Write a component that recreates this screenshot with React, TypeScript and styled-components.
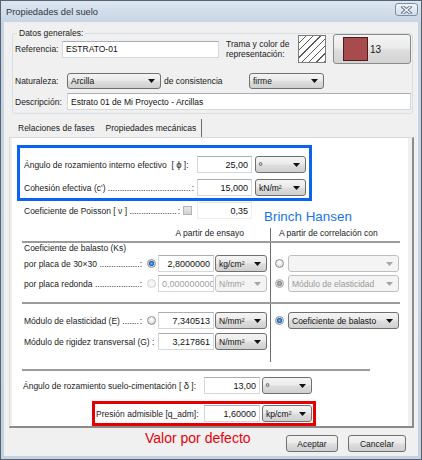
import React from "react";
import styled, { createGlobalStyle } from "styled-components";

const GlobalStyle = createGlobalStyle`
  html, body {
    margin: 0;
    padding: 0;
    background: #ffffff;
  }
`;

type RadioState = "on" | "off" | "dim" | "dimOn";

const radioBg: Record<RadioState, string> = {
    on: "radial-gradient(circle, #6bbcf7 0, #1a64c0 2.2px, #cdd2d8 2.9px, #f5f5f5 4.5px)",
    off: "radial-gradient(circle at 50% 35%, #ffffff 0, #e9e9e9 3px, #d2d2d2 4.5px)",
    dim: "radial-gradient(circle, #f8f8f8 0, #ededed 4.5px)",
    dimOn: "radial-gradient(circle, #b8b8b8 0, #8e8e8e 2.2px, #dadada 2.9px, #f1f1f1 4.5px)"
};

const Window = styled.div`
    width: 422px;
    height: 460px;
    box-sizing: border-box;
    border: 1px solid #56626f;
    background: linear-gradient(#dce6f1, #c6d4e4 22px, #c3d1e1);
    display: flex;
    flex-direction: column;
    font-family: "Liberation Sans", Arial, sans-serif;
    font-size: 8.5px;
    color: #1a1a1a;
`;

const TitleBar = styled.div`
    height: 21px;
    flex: none;
    display: flex;
    justify-content: space-between;
    align-items: center;
    padding: 0 3px 0 5px;
`;

const Title = styled.span`
    font-size: 9.3px;
    color: #2e3640;
`;

const CloseButton = styled.div`
    align-self: flex-start;
    margin-top: 2px;
    width: 23px;
    height: 13px;
    box-sizing: border-box;
    border: 1px solid #7f8ea2;
    border-radius: 3px;
    background: linear-gradient(#f1f5fa, #d2dde9);
    display: flex;
    align-items: center;
    justify-content: center;
`;

const Body = styled.div`
    flex: 1;
    margin: 0 3px 3px;
    background: #f0f0f0;
    padding: 0 4px 0 5px;
    display: flex;
    flex-direction: column;
`;

const GroupBox = styled.div`
    position: relative;
    margin: 11px 1px 0 3px;
    border: 1px solid #d5dfe5;
    border-radius: 3px;
    padding: 0 1px 3px 2px;
`;

const Legend = styled.span`
    position: absolute;
    top: -6px;
    left: 4px;
    padding: 0 2px;
    line-height: 11px;
    background: #f0f0f0;
`;

const GroupRow = styled.div<{ $h: number; $mt?: number }>`
    display: flex;
    align-items: center;
    height: ${(p) => p.$h}px;
    margin-top: ${(p) => p.$mt ?? 0}px;
`;

const FieldLabel = styled.span<{ $w: number }>`
    width: ${(p) => p.$w}px;
    flex: none;
    white-space: nowrap;
`;

const Caption = styled.span<{ $w: number; $ml?: number }>`
    width: ${(p) => p.$w}px;
    margin-left: ${(p) => p.$ml ?? 0}px;
    flex: none;
    line-height: 10.5px;
    white-space: nowrap;
`;

const Field = styled.div<{ $w?: number; $left?: boolean; $muted?: boolean; $flat?: boolean; $small?: boolean }>`
    box-sizing: border-box;
    ${(p) => (p.$w ? `width: ${p.$w}px; flex: none;` : "flex: 1;")}
    height: 17px;
    background: #ffffff;
    border: 1px solid ${(p) => (p.$flat ? "#ededed" : "#d4d7dc")};
    border-top-color: ${(p) => (p.$flat ? "#e3e3e3" : "#abadb3")};
    padding: 0 3px;
    display: flex;
    align-items: center;
    justify-content: ${(p) => (p.$left ? "flex-start" : "flex-end")};
    overflow: hidden;
    white-space: nowrap;
    font-size: ${(p) => (p.$small ? "8.5px" : "9px")};
    color: ${(p) => (p.$muted ? "#a0a0a0" : "#111111")};
`;

const Combo = styled.div<{ $w: number; $h?: number; $off?: boolean; $ml?: number }>`
    box-sizing: border-box;
    width: ${(p) => p.$w}px;
    height: ${(p) => p.$h ?? 17}px;
    margin-left: ${(p) => p.$ml ?? 0}px;
    flex: none;
    display: flex;
    align-items: center;
    justify-content: space-between;
    padding: 0 5px 0 3px;
    border: 1px solid ${(p) => (p.$off ? "#bcc0c4" : "#707070")};
    border-radius: 3px;
    background: ${(p) =>
        p.$off ? "#f4f4f4" : "linear-gradient(#f4f4f4, #ebebeb 45%, #dddddd 55%, #d0d0d0)"};
    color: ${(p) => (p.$off ? "#9a9a9a" : "#111111")};
    white-space: nowrap;
`;

const Hatch = styled.div`
    width: 28px;
    height: 28px;
    flex: none;
    box-sizing: border-box;
    border: 1px solid #7c7c7c;
    background: repeating-linear-gradient(135deg, #ffffff 0 4.4px, #5a5a5a 4.4px 5.2px);
`;

const ColorButton = styled.div`
    box-sizing: border-box;
    width: 78px;
    height: 30px;
    margin-left: 7px;
    flex: none;
    display: flex;
    align-items: center;
    padding-left: 9px;
    border: 1px solid #8a8a8a;
    border-radius: 3px;
    background: linear-gradient(#f4f4f4, #ebebeb 45%, #dddddd 55%, #d3d3d3);
    font-size: 10px;
`;

const Swatch = styled.span`
    width: 25px;
    height: 24px;
    box-sizing: border-box;
    margin-right: 2px;
    border: 1px solid #4b1d1d;
    background: #a84b4d;
`;

const TabStrip = styled.div`
    display: flex;
    height: 18px;
    margin-top: 5px;
    padding-left: 4px;
`;

const Tab = styled.div<{ $active?: boolean }>`
    padding: 0 5px;
    line-height: 18px;
    white-space: nowrap;
    border-right: 1px solid ${(p) => (p.$active ? "#6d6d6d" : "transparent")};
    box-sizing: border-box;
`;

const Panel = styled.div`
    height: 291px;
    box-sizing: border-box;
    border: 1px solid;
    border-color: #dadada #8b8b8b #8b8b8b #dadada;
    border-width: 1px 2px 2px 1px;
    padding: 0 4px 0 2px;
    background: #f0f0f0;
`;

const PanelBody = styled.div`
    height: 100%;
    box-sizing: border-box;
    background: #ffffff;
    padding: 7px 0 0 5px;
    display: flex;
    flex-direction: column;
    align-items: flex-start;
`;

const HighlightBox = styled.div<{ $color: string; $w: number; $ml?: number; $mt?: number }>`
    box-sizing: border-box;
    width: ${(p) => p.$w}px;
    margin-left: ${(p) => p.$ml ?? 0}px;
    margin-top: ${(p) => p.$mt ?? 0}px;
    border: 3px solid ${(p) => p.$color};
    display: flex;
    flex-direction: column;
`;

const FormRow = styled.div<{ $mt?: number; $pl?: number }>`
    display: flex;
    align-items: center;
    height: 17px;
    margin-top: ${(p) => p.$mt ?? 0}px;
    padding-left: ${(p) => p.$pl ?? 0}px;
`;

const Label = styled.div<{ $w: number }>`
    width: ${(p) => p.$w}px;
    flex: none;
    display: flex;
    align-items: center;
    white-space: pre;
    box-sizing: border-box;
`;

const Dots = styled.span`
    flex: 1;
    min-width: 0;
    overflow: hidden;
    margin-right: 1px;

    &::before {
        content: "....................................................................................................";
    }
`;

const Greek = styled.span`
    font-size: 9.5px;
`;

const CheckBox = styled.span`
    width: 9px;
    height: 9px;
    flex: none;
    box-sizing: border-box;
    border: 1px solid #b4b4b4;
    background: linear-gradient(#e9e9e9, #d1d1d1);
    margin-right: 5px;
`;

const Radio = styled.span<{ $state: RadioState }>`
    width: 9px;
    height: 9px;
    flex: none;
    box-sizing: border-box;
    border-radius: 50%;
    border: 1px solid ${(p) => (p.$state === "dim" ? "#d6d6d6" : p.$state === "dimOn" ? "#a9a9a9" : "#8e8f8f")};
    background: ${(p) => radioBg[p.$state]};
`;

const RadioSlot = styled.span`
    width: 13px;
    flex: none;
    display: flex;
    padding-left: 2px;
    box-sizing: border-box;
`;

const Annotation = styled.span<{ $color: string; $size: number }>`
    color: ${(p) => p.$color};
    font-size: ${(p) => p.$size}px;
    line-height: 16px;
    white-space: nowrap;
`;

const BrinchNote = styled(Annotation)`
    align-self: flex-start;
    margin: 7px 0 0 12px;
`;

const Section = styled.div`
    width: 378px;
    height: 136px;
    margin: 7px 0 0 5px;
    display: flex;
    flex-direction: column;
    background: linear-gradient(#6b6b6b, #6b6b6b) 248px 2px / 1px calc(100% - 2px) no-repeat;
`;

const SectionHead = styled.div`
    display: flex;
    height: 15px;
    line-height: 15px;
`;

const HeadLeft = styled.div`
    width: 248px;
    flex: none;
    text-align: right;
    padding-right: 26px;
    box-sizing: border-box;
`;

const HeadRight = styled.div`
    padding-left: 9px;
`;

const Rule = styled.div<{ $w?: number; $mt?: number; $ml?: number }>`
    height: 2px;
    flex: none;
    width: ${(p) => (p.$w ? `${p.$w}px` : "100%")};
    margin-top: ${(p) => p.$mt ?? 0}px;
    margin-left: ${(p) => p.$ml ?? 0}px;
    background: #9b9b9b;
`;

const SubTitle = styled.div`
    height: 10px;
    line-height: 10px;
    padding-left: 2px;
`;

const SplitRow = styled.div<{ $h: number; $mt?: number }>`
    display: flex;
    align-items: center;
    height: ${(p) => p.$h}px;
    margin-top: ${(p) => p.$mt ?? 0}px;
`;

const LeftCell = styled.div`
    width: 248px;
    flex: none;
    display: flex;
    align-items: center;
    padding-left: 2px;
    box-sizing: border-box;
`;

const RightCell = styled.div`
    flex: 1;
    display: flex;
    align-items: center;
    gap: 4px;
    padding-left: 5px;
`;

const Footer = styled.div`
    display: flex;
    align-items: flex-start;
    margin-top: 7px;
    padding-right: 8px;
`;

const FooterNote = styled(Annotation)`
    margin: -5px 0 0 136px;
    flex: 1;
`;

const PushButton = styled.div<{ $w: number; $ml?: number }>`
    box-sizing: border-box;
    width: ${(p) => p.$w}px;
    height: 17px;
    margin-left: ${(p) => p.$ml ?? 0}px;
    display: flex;
    align-items: center;
    justify-content: center;
    border: 1px solid #707070;
    border-radius: 3px;
    background: linear-gradient(#f4f4f4, #ebebeb 45%, #dddddd 55%, #cfcfcf);
`;

const Arrow = ({ off }: { off?: boolean }): React.ReactElement => (
    <svg width="7" height="4" viewBox="0 0 7 4">
        <polygon points="0,0 7,0 3.5,4" fill={off ? "#a6a6a6" : "#111111"} />
    </svg>
);

const CloseIcon = (): React.ReactElement => (
    <svg width="11" height="8" viewBox="0 0 11 8">
        <path d="M2 1 L9 7 M9 1 L2 7" stroke="#66758a" strokeWidth="3.2" strokeLinecap="square" />
        <path d="M2 1 L9 7 M9 1 L2 7" stroke="#f6f8fb" strokeWidth="1.3" strokeLinecap="square" />
    </svg>
);

const Select = ({ w, h, value, off, ml }: { w: number; h?: number; value: string; off?: boolean; ml?: number }) => (
    <Combo $w={w} $h={h} $off={off} $ml={ml}>
        <span>{value}</span>
        <Arrow off={off} />
    </Combo>
);

const Leader = ({ w, text }: { w: number; text: string }) => (
    <Label $w={w} style={{ paddingRight: 3 }}>
        <span>{text} </span>
        <Dots />
        <span>:</span>
    </Label>
);

const App = (): React.ReactElement => (
    <>
        <GlobalStyle />
        <Window>
            <TitleBar>
                <Title>Propiedades del suelo</Title>
                <CloseButton>
                    <CloseIcon />
                </CloseButton>
            </TitleBar>
            <Body>
                <GroupBox>
                    <Legend>Datos generales:</Legend>
                    <GroupRow $h={30}>
                        <FieldLabel $w={47}>Referencia:</FieldLabel>
                        <Field $w={157} $left $small>
                            ESTRATO-01
                        </Field>
                        <Caption $w={72} $ml={7}>
                            Trama y color de
                            <br />
                            representación:
                        </Caption>
                        <Hatch />
                        <ColorButton>
                            <Swatch />
                            <span>13</span>
                        </ColorButton>
                    </GroupRow>
                    <GroupRow $h={16} $mt={9}>
                        <FieldLabel $w={52}>Naturaleza:</FieldLabel>
                        <Select w={94} h={16} value="Arcilla" />
                        <Caption $w={85} $ml={3}>
                            de consistencia
                        </Caption>
                        <Select w={75} h={16} value="firme" />
                    </GroupRow>
                    <GroupRow $h={17} $mt={4}>
                        <FieldLabel $w={52}>Descripción:</FieldLabel>
                        <Field $left $small>
                            Estrato 01 de Mi Proyecto - Arcillas
                        </Field>
                    </GroupRow>
                </GroupBox>

                <TabStrip>
                    <Tab>Relaciones de fases</Tab>
                    <Tab $active>Propiedades mecánicas</Tab>
                </TabStrip>

                <Panel>
                    <PanelBody>
                        <HighlightBox $color="#0b63f2" $w={295} style={{ padding: "8px 3px 2px 4px" }}>
                            <FormRow>
                                <Label $w={173}>
                                    Ángulo de rozamiento interno efectivo{"  "}[ <Greek>ϕ</Greek> ]:
                                </Label>
                                <Field $w={55}>25,00</Field>
                                <Select w={51} ml={3} value="º" />
                            </FormRow>
                            <FormRow $mt={6}>
                                <Leader w={173} text="Cohesión efectiva (c')" />
                                <Field $w={55}>15,000</Field>
                                <Select w={51} ml={3} value="kN/m²" />
                            </FormRow>
                        </HighlightBox>

                        <FormRow $mt={1} $pl={7}>
                            <Leader w={159} text="Coeficiente de Poisson [ ν ]" />
                            <CheckBox />
                            <Field $w={55} $flat>
                                0,35
                            </Field>
                            <BrinchNote $color="#1873e6" $size={13.4}>
                                Brinch Hansen
                            </BrinchNote>
                        </FormRow>

                        <Section>
                            <SectionHead>
                                <HeadLeft>A partir de ensayo</HeadLeft>
                                <HeadRight>A partir de correlación con</HeadRight>
                            </SectionHead>
                            <Rule />
                            <SubTitle>Coeficiente de balasto (Ks)</SubTitle>
                            <SplitRow $h={21}>
                                <LeftCell>
                                    <Leader w={121} text="por placa de 30×30" />
                                    <RadioSlot>
                                        <Radio $state="on" />
                                    </RadioSlot>
                                    <Field $w={56}>2,8000000</Field>
                                    <Select w={52} ml={1} value="kg/cm²" />
                                </LeftCell>
                                <RightCell>
                                    <Radio $state="off" />
                                    <Select w={111} off value="" />
                                </RightCell>
                            </SplitRow>
                            <SplitRow $h={19}>
                                <LeftCell>
                                    <Leader w={121} text="por placa redonda" />
                                    <RadioSlot>
                                        <Radio $state="dim" />
                                    </RadioSlot>
                                    <Field $w={56} $left $muted>
                                        0,000000000
                                    </Field>
                                    <Select w={52} ml={1} off value="N/mm²" />
                                </LeftCell>
                                <RightCell>
                                    <Radio $state="dimOn" />
                                    <Select w={111} off value="Módulo de elasticidad" />
                                </RightCell>
                            </SplitRow>
                            <Rule $mt={9} />
                            <SplitRow $h={21} $mt={6}>
                                <LeftCell>
                                    <Leader w={121} text="Módulo de elasticidad (E)" />
                                    <RadioSlot>
                                        <Radio $state="off" />
                                    </RadioSlot>
                                    <Field $w={56}>7,340513</Field>
                                    <Select w={52} ml={1} value="N/mm²" />
                                </LeftCell>
                                <RightCell>
                                    <Radio $state="on" />
                                    <Select w={111} value="Coeficiente de balasto" />
                                </RightCell>
                            </SplitRow>
                            <SplitRow $h={21}>
                                <LeftCell>
                                    <Label $w={134}>Módulo de rigidez transversal (G) :</Label>
                                    <Field $w={56}>3,217861</Field>
                                    <Select w={52} ml={1} value="N/mm²" />
                                </LeftCell>
                            </SplitRow>
                        </Section>

                        <Rule $w={348} $mt={7} $ml={5} />

                        <FormRow $mt={6} $pl={6}>
                            <Label $w={181}>
                                Ángulo de rozamiento suelo-cimentación [ <Greek>δ</Greek> ]:
                            </Label>
                            <Field $w={56}>13,00</Field>
                            <Select w={50} ml={2} value="º" />
                        </FormRow>

                        <HighlightBox $color="#e60000" $w={224} $ml={75} $mt={7} style={{ padding: "1px 0 1px 1px" }}>
                            <FormRow>
                                <Label $w={108}>Presión admisible [q_adm]:</Label>
                                <Field $w={56}>1,60000</Field>
                                <Select w={50} ml={2} value="kp/cm²" />
                            </FormRow>
                        </HighlightBox>
                    </PanelBody>
                </Panel>

                <Footer>
                    <FooterNote $color="#e8000b" $size={14}>
                        Valor por defecto
                    </FooterNote>
                    <PushButton $w={52}>Aceptar</PushButton>
                    <PushButton $w={58} $ml={10}>
                        Cancelar
                    </PushButton>
                </Footer>
            </Body>
        </Window>
    </>
);

export default App;
